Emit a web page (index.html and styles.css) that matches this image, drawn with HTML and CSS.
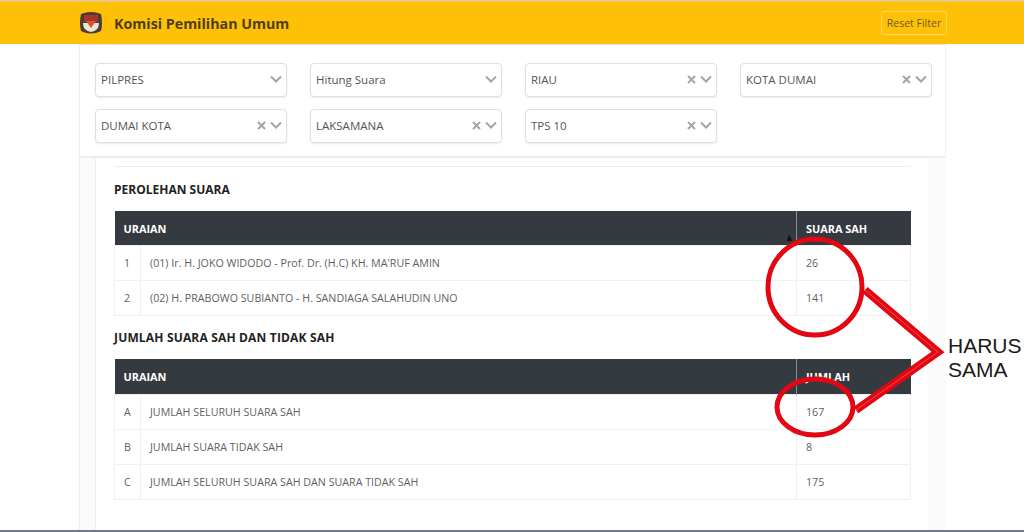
FILE: index.html
```html
<!DOCTYPE html>
<html lang="en">
<head>
    <meta charset="UTF-8">
    <meta name="viewport" content="width=device-width, initial-scale=1.0">
    <title>Komisi Pemilihan Umum</title>
    <link rel="stylesheet" href="styles.css">
</head>
<body>
    <nav class="navbar">
        <div class="brand">
            <svg class="logo" width="24" height="24" viewBox="0 0 24 24">
                <path d="M2 3 Q12 -1 22 3 Q24 12 22 20 Q12 25 2 20 Q0 12 2 3Z" fill="#4a3a34"/>
                <path d="M5 4 H19 V11 H5Z" fill="#a8352c"/>
                <path d="M4 12 H20 Q20 20 12 21 Q4 20 4 12Z" fill="#e9e6dc"/>
                <path d="M7 10 H17 L12 17Z" fill="#e0502c"/>
            </svg>
            <span class="brand-name">Komisi Pemilihan Umum</span>
        </div>
        <button class="reset-btn">Reset Filter</button>
    </nav>

    <div class="page">
        <div class="filter-card">
            <div class="select"><span>PILPRES</span><span class="select-icons"><svg width="12" height="8" viewBox="0 0 12 8"><path d="M1 1.500 L6 6.500 L11 1.500" class="chev"/></svg></span></div>
            <div class="select"><span>Hitung Suara</span><span class="select-icons"><svg width="12" height="8" viewBox="0 0 12 8"><path d="M1 1.500 L6 6.500 L11 1.500" class="chev"/></svg></span></div>
            <div class="select"><span>RIAU</span><span class="select-icons"><svg width="9" height="9" viewBox="0 0 9 9"><path d="M1 1 L8 8 M8 1 L1 8" class="chev"/></svg><svg width="12" height="8" viewBox="0 0 12 8"><path d="M1 1.500 L6 6.500 L11 1.500" class="chev"/></svg></span></div>
            <div class="select"><span>KOTA DUMAI</span><span class="select-icons"><svg width="9" height="9" viewBox="0 0 9 9"><path d="M1 1 L8 8 M8 1 L1 8" class="chev"/></svg><svg width="12" height="8" viewBox="0 0 12 8"><path d="M1 1.500 L6 6.500 L11 1.500" class="chev"/></svg></span></div>
            <div class="select"><span>DUMAI KOTA</span><span class="select-icons"><svg width="9" height="9" viewBox="0 0 9 9"><path d="M1 1 L8 8 M8 1 L1 8" class="chev"/></svg><svg width="12" height="8" viewBox="0 0 12 8"><path d="M1 1.500 L6 6.500 L11 1.500" class="chev"/></svg></span></div>
            <div class="select"><span>LAKSAMANA</span><span class="select-icons"><svg width="9" height="9" viewBox="0 0 9 9"><path d="M1 1 L8 8 M8 1 L1 8" class="chev"/></svg><svg width="12" height="8" viewBox="0 0 12 8"><path d="M1 1.500 L6 6.500 L11 1.500" class="chev"/></svg></span></div>
            <div class="select"><span>TPS 10</span><span class="select-icons"><svg width="9" height="9" viewBox="0 0 9 9"><path d="M1 1 L8 8 M8 1 L1 8" class="chev"/></svg><svg width="12" height="8" viewBox="0 0 12 8"><path d="M1 1.500 L6 6.500 L11 1.500" class="chev"/></svg></span></div>
        </div>

        <div class="content">
            <div class="prev-edge"></div>

            <h2 class="section-title">PEROLEHAN SUARA</h2>
            <table class="data-table short-head">
                <colgroup><col class="col-no"><col><col class="col-val"></colgroup>
                <thead>
                    <tr><th colspan="2">URAIAN</th><th class="th-val">SUARA SAH</th></tr>
                </thead>
                <tbody>
                    <tr><td>1</td><td>(01) Ir. H. JOKO WIDODO - Prof. Dr. (H.C) KH. MA'RUF AMIN</td><td>26</td></tr>
                    <tr><td>2</td><td>(02) H. PRABOWO SUBIANTO - H. SANDIAGA SALAHUDIN UNO</td><td>141</td></tr>
                </tbody>
            </table>

            <h2 class="section-title second">JUMLAH SUARA SAH DAN TIDAK SAH</h2>
            <table class="data-table">
                <colgroup><col class="col-no"><col><col class="col-val"></colgroup>
                <thead>
                    <tr><th colspan="2">URAIAN</th><th class="th-val">JUMLAH</th></tr>
                </thead>
                <tbody>
                    <tr><td>A</td><td>JUMLAH SELURUH SUARA SAH</td><td>167</td></tr>
                    <tr><td>B</td><td>JUMLAH SUARA TIDAK SAH</td><td>8</td></tr>
                    <tr><td>C</td><td>JUMLAH SELURUH SUARA SAH DAN SUARA TIDAK SAH</td><td>175</td></tr>
                </tbody>
            </table>
        </div>
    </div>

    <div class="taskbar"></div>

    <!-- red hand-drawn notes on top of the screenshot -->
    <svg class="notes" width="1024" height="532" viewBox="0 0 1024 532">
        <path d="M789 234 L792 241 L787 241Z" fill="#111"/>
        <ellipse cx="815" cy="287" rx="47" ry="48" class="ring"/>
        <ellipse cx="815" cy="407" rx="38" ry="28" class="ring"/>
        <path d="M865 290 L938 352 L856 410" class="arm"/>
        <path d="M865 290 L938 352 L856 410" class="arm-inner"/>
    </svg>
    <div class="note-text">HARUS<br>SAMA</div>
</body>
</html>
```

FILE: styles.css
```css
body {
    font-family: "Open Sans", Arial, sans-serif;
    background-color: #fff;
    margin: 0;
    height: 532px;
    overflow: hidden;
    position: relative;
    color: #555;
}
.navbar {
    height: 42px;
    background-color: #ffc107;
    border-top: 2px solid #e8c878;
    display: flex;
    align-items: center;
    justify-content: space-between;
    padding: 0 77px 0 79px;
}
.brand {
    display: flex;
    align-items: center;
    gap: 11px;
}
.logo {
    display: block;
}
.brand-name {
    font-size: 14.250px;
    font-weight: 700;
    color: #4d3f14;
}
.reset-btn {
    width: 66px;
    height: 24px;
    padding: 0;
    font-family: inherit;
    font-size: 10.500px;
    color: #6e5a1c;
    background: transparent;
    border: 1px solid #ffd65c;
    border-radius: 3px;
}
.page {
    width: 867px;
    height: 486px;
    margin-left: 79px;
    background-color: #fbfbfb;
    border-left: 1px solid #eee;
    box-sizing: border-box;
}
.filter-card {
    height: 114px;
    box-sizing: border-box;
    background-color: #fff;
    border-bottom: 2px solid #eeeeee;
    border-top: 1px solid #e4e8f2;
    border-right: 1px solid #f2f2f2;
    padding: 18px 14px 0 15px;
    display: grid;
    grid-template-columns: repeat(4, 191.500px);
    grid-auto-rows: 34px;
    column-gap: 23.500px;
    row-gap: 12px;
}
.select {
    display: flex;
    align-items: center;
    justify-content: space-between;
    padding: 0 4px 2px 5px;
    box-sizing: border-box;
    font-size: 11.500px;
    color: #555;
    background-color: #fff;
    border: 1px solid #dfdfe4;
    border-radius: 4px;
    box-shadow: 0 1px 2px rgba(0, 0, 0, 0.08);
}
.select-icons {
    display: flex;
    align-items: center;
    gap: 4px;
}
.chev {
    fill: none;
    stroke: #a5a5a5;
    stroke-width: 2;
}
.content {
    width: 833px;
    height: 372px;
    margin-left: 15px;
    box-sizing: border-box;
    background-color: #fff;
    border-left: 1px solid #eee;
    padding: 0 17px 0 18px;
}
.prev-edge {
    height: 8px;
    border-bottom: 1px solid #eee;
}
.section-title {
    margin: 14px 0 13px;
    height: 17px;
    line-height: 17px;
    font-size: 12px;
    font-weight: 700;
    color: #222;
}
.section-title.second {
    margin: 13px 0 13px;
    letter-spacing: 0.170px;
}
.data-table {
    width: 797px;
    border-collapse: collapse;
    table-layout: fixed;
    font-size: 10.700px;
}
.col-no {
    width: 26px;
}
.col-val {
    width: 114px;
}
.data-table th {
    height: 35px;
    padding: 0 9px;
    text-align: left;
    font-size: 10.900px;
    font-weight: 700;
    color: #fff;
    background-color: #343a40;
}
.short-head th {
    height: 34px;
}
.data-table th.th-val {
    border-left: 1px solid #8a8e93;
}
.data-table td {
    height: 34px;
    padding: 0 9px;
    color: #5f5f5f;
    border: 1px solid #f0f0f0;
}
.taskbar {
    position: absolute;
    left: 0;
    right: 0;
    bottom: 0;
    height: 2px;
    background-color: #6b7a8c;
}
.notes {
    position: absolute;
    left: 0;
    top: 0;
}
.ring {
    fill: none;
    stroke: #e30613;
    stroke-width: 5;
}
.arm {
    fill: none;
    stroke: #e30613;
    stroke-width: 8;
}
.arm-inner {
    fill: none;
    stroke: #f04a4a;
    stroke-width: 1;
}
.note-text {
    position: absolute;
    left: 948px;
    top: 334px;
    font-family: "Liberation Sans", Arial, sans-serif;
    font-size: 21px;
    line-height: 24px;
    color: #1a1a1a;
}
```
